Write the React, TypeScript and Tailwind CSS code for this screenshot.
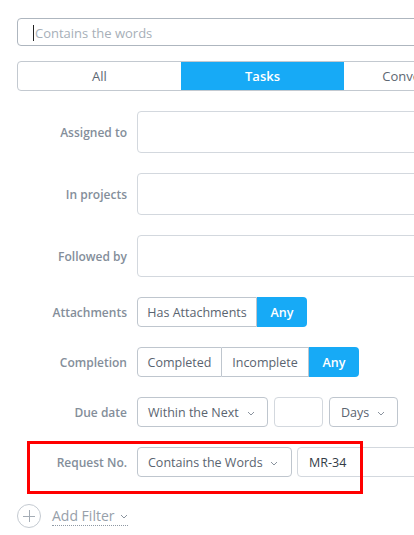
import React from "react";

const Chevron = () => (
  <svg width="8" height="5" viewBox="0 0 8 5" className="shrink-0">
    <polyline points="1,1 4,4 7,1" fill="none" stroke="#8a939e" strokeWidth="1" />
  </svg>
);

const Label = ({ children }: { children: React.ReactNode }) => (
  <div className="w-[110px] shrink-0 pt-[2px] text-right text-[12px] font-semibold text-[#848e9a]">{children}</div>
);

export default function App() {
  return (
    <div className="relative w-[414px] h-[535px] overflow-hidden bg-white" style={{ fontFamily: '"Open Sans", "Noto Sans", sans-serif' }}>
      <div className="w-[520px] pl-[17px] pt-[18px]">
        {/* search */}
        <div className="flex h-[28px] items-center rounded-[4px] border border-[#aeb6bf] pl-[15px] pt-[3px] text-[13px] text-[#a7afb8]">
          <span className="mr-[1px] inline-block h-[16px] w-[1px] -translate-y-[1px] bg-[#222]" />
          Contains the words
        </div>
        {/* tabs */}
        <div className="mt-[15px] flex h-[30px] overflow-hidden rounded-[4px] border border-[#c3c9d0] pt-[1px] text-[13px]">
          <div className="flex w-[163px] items-center justify-center text-[#5d6773]">All</div>
          <div className="flex w-[163px] -mt-[1px] items-center justify-center bg-[#17aaf6] pt-[1px] font-semibold text-white">Tasks</div>
          <div className="flex w-[163px] items-center justify-center text-[#5d6773]">Conversations</div>
        </div>

        <div className="mt-[20px] flex h-[42px] items-center gap-[10px]">
          <Label>Assigned to</Label>
          <div className="h-full flex-1 rounded-[4px] border border-[#d3d8de]" />
        </div>
        <div className="mt-[20px] flex h-[42px] items-center gap-[10px]">
          <Label>In projects</Label>
          <div className="h-full flex-1 rounded-[4px] border border-[#d3d8de]" />
        </div>
        <div className="mt-[20px] flex h-[42px] items-center gap-[10px]">
          <Label>Followed by</Label>
          <div className="h-full flex-1 rounded-[4px] border border-[#d3d8de]" />
        </div>

        <div className="mt-[20px] flex h-[30px] items-center gap-[10px]">
          <Label>Attachments</Label>
          <div className="flex h-full text-[12.5px]">
            <div className="flex w-[120px] items-center justify-center rounded-l-[4px] border border-[#bfc6ce] pt-[2px] text-[#5a6470]">Has Attachments</div>
            <div className="flex w-[50px] items-center justify-center rounded-r-[4px] bg-[#17aaf6] pt-[2px] font-semibold text-white">Any</div>
          </div>
        </div>

        <div className="mt-[20px] flex h-[30px] items-center gap-[10px]">
          <Label>Completion</Label>
          <div className="flex h-full text-[12.5px]">
            <div className="flex w-[85px] items-center justify-center rounded-l-[4px] border border-[#bfc6ce] pt-[2px] text-[#5a6470]">Completed</div>
            <div className="flex w-[87px] items-center justify-center border border-l-0 border-[#bfc6ce] pt-[2px] text-[#5a6470]">Incomplete</div>
            <div className="flex w-[50px] items-center justify-center rounded-r-[4px] bg-[#17aaf6] pt-[2px] font-semibold text-white">Any</div>
          </div>
        </div>

        <div className="mt-[20px] flex h-[30px] items-center gap-[10px]">
          <Label>Due date</Label>
          <div className="flex h-full gap-[6px] text-[12.5px] text-[#5a6470]">
            <div className="flex w-[131px] items-center justify-between rounded-[4px] border border-[#bfc6ce] pl-[10px] pr-[12px] pt-[2px]">
              <span>Within the Next</span>
              <Chevron />
            </div>
            <div className="w-[49px] rounded-[4px] border border-[#d3d8de]" />
            <div className="flex w-[69px] items-center justify-between rounded-[4px] border border-[#bfc6ce] pl-[11px] pr-[12px] pt-[2px]">
              <span>Days</span>
              <Chevron />
            </div>
          </div>
        </div>

        <div className="mt-[20px] flex h-[30px] items-center gap-[10px]">
          <Label>Request No.</Label>
          <div className="flex h-full flex-1 gap-[5px] text-[12.5px] text-[#5a6470]">
            <div className="flex w-[155px] shrink-0 items-center justify-between rounded-[4px] border border-[#bfc6ce] pl-[10px] pr-[13px] pt-[2px]">
              <span>Contains the Words</span>
              <Chevron />
            </div>
            <div className="flex flex-1 items-center rounded-[4px] border border-[#d3d8de] pl-[11px] pt-[2px] text-[#333c46]">MR-34</div>
          </div>
        </div>

        <div className="mt-[27px] flex items-center gap-[11px]">
          <div className="relative h-[24px] w-[24px] rounded-full border border-[#c4cad1]">
            <div className="absolute left-[5px] top-[11px] h-[1px] w-[12px] bg-[#a4acb5]" />
            <div className="absolute left-[11px] top-[5px] h-[12px] w-[1px] bg-[#a4acb5]" />
          </div>
          <div className="flex items-center gap-[5px] border-b border-dotted border-[#8e98a3] pt-[1px] text-[14px] leading-[18px] text-[#97a0aa]">
            <span>Add Filter</span>
            <Chevron />
          </div>
        </div>
      </div>

      <div className="absolute left-[27px] top-[441px] h-[53px] w-[336px] border-[3px] border-[#ff0000]" />
    </div>
  );
}
